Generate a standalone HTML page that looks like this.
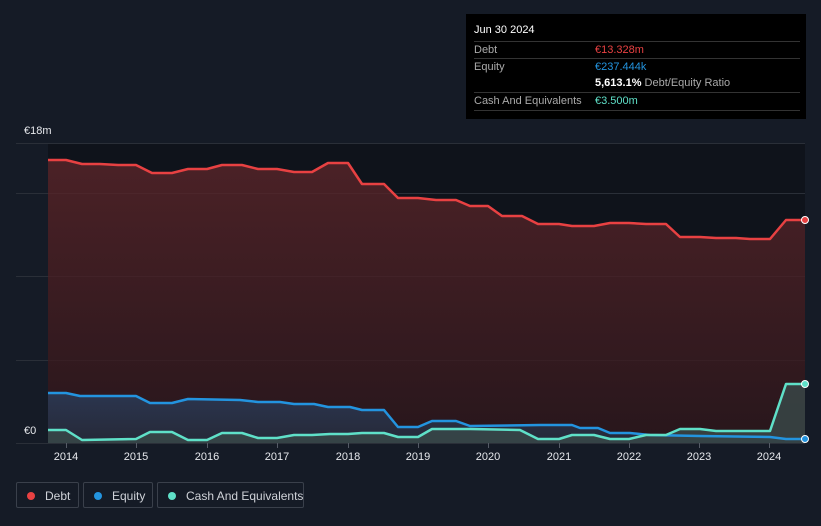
<!DOCTYPE html><html><head><style>
body{margin:0;width:821px;height:526px;background:#151b26;font-family:"Liberation Sans",sans-serif;overflow:hidden;position:relative}
.tt{position:absolute;left:466px;top:14px;width:340px;height:105px;background:#000;color:#fff;font-size:11px}
.tt .r{position:absolute;left:8px;width:326px;border-top:1px solid #333;height:17px;line-height:17px;white-space:nowrap}
.lg{position:absolute;top:482px;height:26px;border:1px solid #3a404b;border-radius:2px;color:#cfd2d8;font-size:12px;line-height:26px;box-sizing:border-box;white-space:nowrap}
.lg i{position:absolute;left:10px;top:9px;width:8px;height:8px;border-radius:50%}
.yr{position:absolute;top:451px;color:#e6e8ec;font-size:11px;transform:translateX(-50%)}
</style></head><body>
<svg width="821" height="526" style="position:absolute;left:0;top:0">
<defs>
<linearGradient id="dg" x1="0" y1="0" x2="0" y2="1"><stop offset="0" stop-color="#5a2529" stop-opacity=".8"/><stop offset="1" stop-color="#2e171c" stop-opacity=".8"/></linearGradient>
<linearGradient id="eg" x1="0" y1="0" x2="0" y2="1"><stop offset="0" stop-color="#2b3b58"/><stop offset="1" stop-color="#252c3d"/></linearGradient>
</defs>
<rect x="48" y="143" width="757" height="300" fill="#0f131b"/>
<g stroke="#2a2f38" stroke-width="1"><line x1="16" y1="143.5" x2="805" y2="143.5"/><line x1="16" y1="193.5" x2="805" y2="193.5"/><line x1="16" y1="276.5" x2="805" y2="276.5"/><line x1="16" y1="360.5" x2="805" y2="360.5"/><line x1="16" y1="443.5" x2="805" y2="443.5"/></g>
<path fill="url(#dg)" d="M48 160L66 160L82 164L100 164L118 165L136 165L152 173L172 173L188 169L207 169L222 165L242 165L258 169L277 169L294 172L312 172L328 163L348 163L362 184L384 184L398 198L418 198L436 200L456 200L470 206L488 206L502 216L522 216L538 224L559 224L572 226L594 226L610 223L629 223L646 224L666 224L680 237L700 237L716 238L736 238L750 239L770 239L786 220L805 220L805 443L48 443Z"/>
<path fill="url(#eg)" opacity=".85" d="M48 393L66 393L80 396L136 396L150 403L172 403L188 399L240 400L258 402L280 402L294 404L314 404L328 407L350 407L362 410L384 410L398 427L418 427L432 421L456 421L470 426L540 425L572 425L580 428L598 428L610 433L630 433L650 435L700 436L770 437L786 439L805 439L805 443L48 443Z"/>
<path fill="#3a4a4a" opacity=".8" d="M48 430L66 430L82 440L136 439L150 432L172 432L188 440L207 440L222 433L242 433L258 438L277 438L294 435L312 435L330 434L348 434L362 433L384 433L398 437L418 437L432 429L470 429L520 430L538 439L559 439L572 435L594 435L610 439L629 439L646 435L666 435L680 429L700 429L716 431L770 431L786 384L805 384L805 443L48 443Z"/>
<g fill="none" stroke-width="2.5" stroke-linejoin="round">
<path stroke="#e84142" d="M48 160L66 160L82 164L100 164L118 165L136 165L152 173L172 173L188 169L207 169L222 165L242 165L258 169L277 169L294 172L312 172L328 163L348 163L362 184L384 184L398 198L418 198L436 200L456 200L470 206L488 206L502 216L522 216L538 224L559 224L572 226L594 226L610 223L629 223L646 224L666 224L680 237L700 237L716 238L736 238L750 239L770 239L786 220L805 220"/>
<path stroke="#2394df" d="M48 393L66 393L80 396L136 396L150 403L172 403L188 399L240 400L258 402L280 402L294 404L314 404L328 407L350 407L362 410L384 410L398 427L418 427L432 421L456 421L470 426L540 425L572 425L580 428L598 428L610 433L630 433L650 435L700 436L770 437L786 439L805 439"/>
<path stroke="#5fe0c8" d="M48 430L66 430L82 440L136 439L150 432L172 432L188 440L207 440L222 433L242 433L258 438L277 438L294 435L312 435L330 434L348 434L362 433L384 433L398 437L418 437L432 429L470 429L520 430L538 439L559 439L572 435L594 435L610 439L629 439L646 435L666 435L680 429L700 429L716 431L770 431L786 384L805 384"/>
</g>
<circle cx="805" cy="220" r="3.5" fill="#e84142" stroke="#fff" stroke-width="1"/>
<circle cx="805" cy="384" r="3.5" fill="#5fe0c8" stroke="#fff" stroke-width="1"/>
<circle cx="805" cy="439" r="3.5" fill="#2394df" stroke="#fff" stroke-width="1"/>
<g stroke="#555b66"><line x1="66.5" y1="443" x2="66.5" y2="448"/><line x1="136.5" y1="443" x2="136.5" y2="448"/><line x1="207.5" y1="443" x2="207.5" y2="448"/><line x1="277.5" y1="443" x2="277.5" y2="448"/><line x1="348.5" y1="443" x2="348.5" y2="448"/><line x1="418.5" y1="443" x2="418.5" y2="448"/><line x1="488.5" y1="443" x2="488.5" y2="448"/><line x1="559.5" y1="443" x2="559.5" y2="448"/><line x1="629.5" y1="443" x2="629.5" y2="448"/><line x1="699.5" y1="443" x2="699.5" y2="448"/><line x1="769.5" y1="443" x2="769.5" y2="448"/></g>
</svg>
<div style="position:absolute;left:24px;top:125px;color:#e6e8ec;font-size:11px">€18m</div>
<div style="position:absolute;left:24px;top:425px;color:#e6e8ec;font-size:11px">€0</div>
<div class="yr" style="left:66px">2014</div><div class="yr" style="left:136px">2015</div><div class="yr" style="left:207px">2016</div><div class="yr" style="left:277px">2017</div><div class="yr" style="left:348px">2018</div><div class="yr" style="left:418px">2019</div><div class="yr" style="left:488px">2020</div><div class="yr" style="left:559px">2021</div><div class="yr" style="left:629px">2022</div><div class="yr" style="left:699px">2023</div><div class="yr" style="left:769px">2024</div>
<div class="tt">
<div style="position:absolute;left:8px;top:10px">Jun 30 2024</div>
<div class="r" style="top:27px"><span style="color:#aaa">Debt</span><span style="position:absolute;left:121px;color:#e84142">€13.328m</span></div>
<div class="r" style="top:44px"><span style="color:#aaa">Equity</span><span style="position:absolute;left:121px;color:#2394df">€237.444k</span></div>
<div class="r" style="top:61px;border-top:none"><span style="position:absolute;left:121px"><b>5,613.1%</b> <span style="color:#aaa">Debt/Equity Ratio</span></span></div>
<div class="r" style="top:78px"><span style="color:#aaa">Cash And Equivalents</span><span style="position:absolute;left:121px;color:#5fe0c8">€3.500m</span></div>
<div style="position:absolute;left:8px;top:96px;width:326px;border-top:1px solid #333"></div>
</div>
<div class="lg" style="left:16px;width:63px"><i style="background:#e84142"></i><span style="position:absolute;left:28px">Debt</span></div>
<div class="lg" style="left:83px;width:70px"><i style="background:#2394df"></i><span style="position:absolute;left:28px">Equity</span></div>
<div class="lg" style="left:157px;width:147px"><i style="background:#5fe0c8"></i><span style="position:absolute;left:28px">Cash And Equivalents</span></div>
</body></html>
